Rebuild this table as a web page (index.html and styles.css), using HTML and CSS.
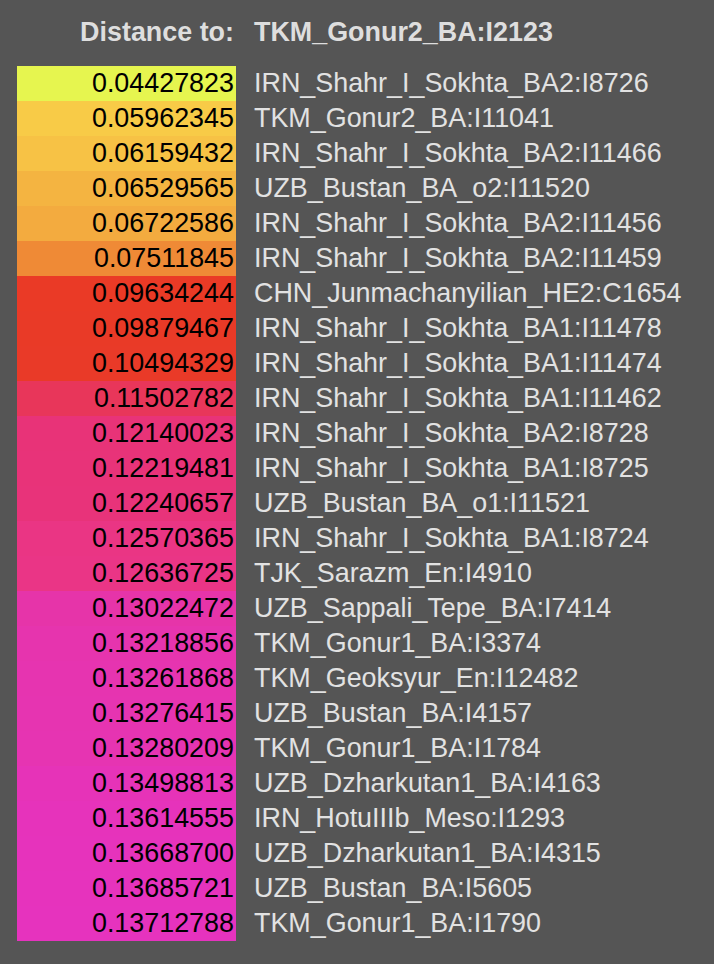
FILE: index.html
```html
<!DOCTYPE html>
<html>
<head>
<meta charset="utf-8">
<link rel="stylesheet" href="styles.css">
</head>
<body>
<div class="panel">
<table class="dist">
<thead>
<tr><th class="lbl">Distance to:</th><th class="tgt">TKM_Gonur2_BA:I2123</th></tr>
</thead>
<tbody>
<tr><td class="val" style="background:#e6f54f">0.04427823</td><td class="name">IRN_Shahr_I_Sokhta_BA2:I8726</td></tr>
<tr><td class="val" style="background:#f8cb47">0.05962345</td><td class="name">TKM_Gonur2_BA:I11041</td></tr>
<tr><td class="val" style="background:#f7c245">0.06159432</td><td class="name">IRN_Shahr_I_Sokhta_BA2:I11466</td></tr>
<tr><td class="val" style="background:#f4b441">0.06529565</td><td class="name">UZB_Bustan_BA_o2:I11520</td></tr>
<tr><td class="val" style="background:#f3ab3f">0.06722586</td><td class="name">IRN_Shahr_I_Sokhta_BA2:I11456</td></tr>
<tr><td class="val" style="background:#ef8a36">0.07511845</td><td class="name">IRN_Shahr_I_Sokhta_BA2:I11459</td></tr>
<tr><td class="val" style="background:#ea3a26">0.09634244</td><td class="name">CHN_Junmachanyilian_HE2:C1654</td></tr>
<tr><td class="val" style="background:#e93a27">0.09879467</td><td class="name">IRN_Shahr_I_Sokhta_BA1:I11478</td></tr>
<tr><td class="val" style="background:#e93a28">0.10494329</td><td class="name">IRN_Shahr_I_Sokhta_BA1:I11474</td></tr>
<tr><td class="val" style="background:#e8365a">0.11502782</td><td class="name">IRN_Shahr_I_Sokhta_BA1:I11462</td></tr>
<tr><td class="val" style="background:#e83378">0.12140023</td><td class="name">IRN_Shahr_I_Sokhta_BA2:I8728</td></tr>
<tr><td class="val" style="background:#e83379">0.12219481</td><td class="name">IRN_Shahr_I_Sokhta_BA1:I8725</td></tr>
<tr><td class="val" style="background:#e8337a">0.12240657</td><td class="name">UZB_Bustan_BA_o1:I11521</td></tr>
<tr><td class="val" style="background:#ea3584">0.12570365</td><td class="name">IRN_Shahr_I_Sokhta_BA1:I8724</td></tr>
<tr><td class="val" style="background:#ea3586">0.12636725</td><td class="name">TJK_Sarazm_En:I4910</td></tr>
<tr><td class="val" style="background:#e634a9">0.13022472</td><td class="name">UZB_Sappali_Tepe_BA:I7414</td></tr>
<tr><td class="val" style="background:#e634ae">0.13218856</td><td class="name">TKM_Gonur1_BA:I3374</td></tr>
<tr><td class="val" style="background:#e634b0">0.13261868</td><td class="name">TKM_Geoksyur_En:I12482</td></tr>
<tr><td class="val" style="background:#e634b1">0.13276415</td><td class="name">UZB_Bustan_BA:I4157</td></tr>
<tr><td class="val" style="background:#e634b2">0.13280209</td><td class="name">TKM_Gonur1_BA:I1784</td></tr>
<tr><td class="val" style="background:#e633b8">0.13498813</td><td class="name">UZB_Dzharkutan1_BA:I4163</td></tr>
<tr><td class="val" style="background:#e633bb">0.13614555</td><td class="name">IRN_HotuIIIb_Meso:I1293</td></tr>
<tr><td class="val" style="background:#e633bc">0.13668700</td><td class="name">UZB_Dzharkutan1_BA:I4315</td></tr>
<tr><td class="val" style="background:#e633bd">0.13685721</td><td class="name">UZB_Bustan_BA:I5605</td></tr>
<tr><td class="val" style="background:#e633be">0.13712788</td><td class="name">TKM_Gonur1_BA:I1790</td></tr>
</tbody>
</table>
</div>
</body>
</html>
```

FILE: styles.css
```css
html, body {
  margin: 0;
  padding: 0;
  background: #555555;
}
body {
  min-height: 964px;
  font-family: "Liberation Sans", Arial, sans-serif;
}
.panel {
  padding: 15px 0 0 17px;
}
.dist {
  border-collapse: collapse;
  border-spacing: 0;
  font-size: 26.9px;
  line-height: 35px;
}
.dist th, .dist td {
  padding: 0;
  white-space: nowrap;
}
.dist th {
  font-weight: bold;
  color: #dedede;
  padding-bottom: 16px;
}
.lbl {
  width: 217px;
  text-align: right;
  padding-right: 2px !important;
}
.tgt {
  text-align: left;
  padding-left: 18px !important;
}
.val {
  text-align: right;
  color: #000;
  padding-right: 2px !important;
  height: 35px;
}
.name {
  color: #e2e2e2;
  padding-left: 18px !important;
}
```
